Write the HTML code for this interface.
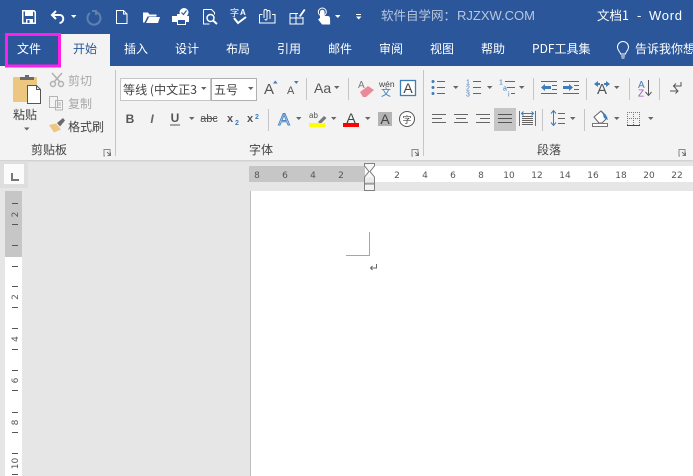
<!DOCTYPE html>
<html><head><meta charset="utf-8"><style>
html,body{margin:0;padding:0;width:693px;height:476px;overflow:hidden;background:#e6e6e6}
svg{display:block}
text{font-family:"Liberation Sans","Noto Sans CJK SC",sans-serif}
.cn{font-family:"Noto Sans CJK SC","Liberation Sans",sans-serif;font-size:12px}
.tab{fill:#fff;text-anchor:middle}
.d{fill:#444}
.dv{stroke:#c6c6c6;stroke-width:1}
.r{font-size:9px;fill:#555;text-anchor:middle;font-family:"DejaVu Sans",sans-serif}
.l{stroke:#666;stroke-width:1;fill:none}
</style></head><body>
<svg width="693" height="476" viewBox="0 0 693 476" xmlns="http://www.w3.org/2000/svg" shape-rendering="crispEdges">
<defs><path id="ar" d="M0 0h5.500l-2.750 3z" shape-rendering="auto"/>
<path id="ln" d="M0 .5h6v6.500M0 0v7h1" fill="none" stroke="#8a8a8a"/></defs>
<rect width="693" height="476" fill="#e6e6e6"/>
<rect width="693" height="66" fill="#2b579a"/>
<rect y="66" width="693" height="94" fill="#f3f3f3"/>
<rect y="160" width="693" height="1.500" fill="#d2d2d2"/>

<!-- QAT -->
<path d="M22.800 10.800h11l1.500 1.500v11h-12.500z" fill="none" stroke="#fff" stroke-width="1.500"/>
<rect x="25" y="11" width="8" height="5" fill="#fff"/><rect x="26" y="19" width="7" height="4.500" fill="#fff"/><rect x="27.500" y="20" width="2" height="3" fill="#2b579a"/>
<g shape-rendering="auto">
<path d="M56 11l-4 4 4 4M52.500 15h7c5 0 5 7.500 0 8" fill="none" stroke="#fff" stroke-width="2"/>
<use href="#ar" x="71" y="15" fill="#fff"/>
<path d="M92 11h4v4M96 12a6.500 6.500 0 1 1-6 1" fill="none" stroke="#5f80b0" stroke-width="2"/>
<path d="M116.500 10.500h7l3.500 3.500v9.500h-10.500zM123.500 10.500v3.500h3.500" fill="none" stroke="#fff" stroke-width="1"/>
<path d="M143 22.500v-10h5l1.500 2h7v2h-9l-3 6zM146 23h12l2-6h-11z" fill="#fff"/>
<path d="M172 16h5v-2h7v2h5v6h-17z" fill="#fff"/><rect x="177.500" y="19.500" width="8" height="5" fill="#2b579a" stroke="#fff"/><circle cx="184" cy="12.500" r="4.500" fill="#fff"/><path d="M181.500 12.500l2 2 3-4" fill="none" stroke="#2b579a" stroke-width="1.200"/>
<path d="M203.500 9.500h8l3 3v2M203.500 9.500v14.500h6" fill="none" stroke="#fff"/><circle cx="210.500" cy="18" r="3.500" fill="none" stroke="#fff" stroke-width="1.500"/><path d="M213 20.500l4 3.500" stroke="#fff" stroke-width="2"/>
<text x="230" y="16" class="cn" style="font-size:9px" fill="#fff">字</text><text x="240" y="15" font-size="8" fill="#fff" font-weight="bold">A</text>
<path d="M234 18l4 5 8-6" fill="none" stroke="#fff" stroke-width="2"/>
<path d="M259.500 14.500h3M272 14.500h3v8.500h-15.500v-8.500" fill="none" stroke="#fff"/><path d="M264 18v-7a1.500 1.500 0 0 1 3 0v8a1 1 0 0 1-2 0M267 12a1.500 1.500 0 0 1 3 0v7" fill="none" stroke="#fff"/>
<path d="M290 13.500h8M290 13.500v10.500h13v-7M290 18h13M296 13.500v10.500" fill="none" stroke="#fff"/><path d="M299 16l5-7 1.500 1-5 7z" fill="#fff"/>
<path d="M320 18v-6a2.300 2.300 0 0 1 4.600 0v4h3c2.500 0 2.500 2 2.500 4v4.500h-8l-4-5z" fill="#fff"/><circle cx="322.300" cy="12" r="4" fill="none" stroke="#fff"/>
<use href="#ar" x="335" y="15" fill="#fff"/>
<rect x="356" y="14" width="5" height="1" fill="#fff"/>
<use href="#ar" x="356" y="16.500" fill="#fff"/>
</g>
<text x="381" y="20" class="cn" fill="#b9c6dc" style="font-size:12.500px">软件自学网：</text>
<text x="457" y="20" fill="#b9c6dc" font-size="13" textLength="78">RJZXW.COM</text>
<text x="597" y="20" class="cn" fill="#fff" style="font-size:12.500px">文档1</text>
<text x="637" y="20" fill="#fff" font-size="13">-</text>
<text x="649" y="20" fill="#fff" font-size="13" textLength="33">Word</text>

<!-- tabs -->
<rect x="61" y="34" width="49" height="32" fill="#f3f3f3"/>
<text x="29" y="53" class="cn tab">文件</text>
<text x="85" y="53" class="cn" text-anchor="middle" fill="#2b579a">开始</text>
<text x="136" y="53" class="cn tab">插入</text>
<text x="187" y="53" class="cn tab">设计</text>
<text x="238" y="53" class="cn tab">布局</text>
<text x="289" y="53" class="cn tab">引用</text>
<text x="340" y="53" class="cn tab">邮件</text>
<text x="391" y="53" class="cn tab">审阅</text>
<text x="442" y="53" class="cn tab">视图</text>
<text x="493" y="53" class="cn tab">帮助</text>
<text x="532" y="53" class="cn" fill="#fff">PDF工具集</text>
<g shape-rendering="auto"><path d="M620.500 54c0-2-3-3.500-3-7a5.500 5.500 0 0 1 11 0c0 3.500-3 5-3 7zM621 56h4M621.500 58h3" fill="none" stroke="#fff"/></g>
<text x="635" y="53" class="cn" fill="#fff">告诉我你想</text>
<rect x="6.500" y="34.500" width="53" height="31.500" fill="none" stroke="#ff1fe8" stroke-width="3"/>

<!-- dividers -->
<path class="dv" d="M115.500 70v86M423.500 70v86M306.500 78v22M348.500 78v22M268.500 109v22M533.500 78v22M586.500 78v22M629.500 78v22M659.500 78v22M542.500 109v22M584.500 109v22"/>

<!-- clipboard -->
<g shape-rendering="auto">
<rect x="13" y="77" width="24" height="25" rx="1" fill="#edc67f"/>
<path d="M20 80v-3h5v-2h4v2h5v3z" fill="#6b6b6b"/>
<path d="M27.500 85.500h9l4 4v14h-13z" fill="#fff" stroke="#555"/>
<path d="M36.500 85.500v4h4" fill="none" stroke="#555"/>
<path d="M52 73l8 9M62 73l-8 9" stroke="#b0b0b0" stroke-width="1.500"/><circle cx="53" cy="84" r="2.500" fill="none" stroke="#b0b0b0" stroke-width="1.500"/><circle cx="61" cy="84" r="2.500" fill="none" stroke="#b0b0b0" stroke-width="1.500"/>
<path d="M49.500 96.500h8v11h-8zM55.500 100.500h7v9.500h-7zM57 103h4M57 105h4M57 107.500h4" fill="#f3f3f3" stroke="#b4b4b4"/>
<path d="M49 125l5 7.500 7-3-5-6z" fill="#edc67f"/><path d="M57 123l6-5 2 2.500-5 6z" fill="#6b6b6b"/>
</g>
<text x="68" y="85" class="cn" fill="#a8a8a8">剪切</text>
<text x="68" y="108" class="cn" fill="#a8a8a8">复制</text>
<text x="68" y="131" class="cn d">格式刷</text>
<text x="25" y="119" class="cn d" text-anchor="middle">粘贴</text>
<use href="#ar" x="24" y="127.500" fill="#666"/>
<text x="49" y="154" class="cn d" text-anchor="middle">剪贴板</text>
<use href="#ln" x="104" y="149"/><path d="M107 152l3 3M110.500 152.500v3h-3" fill="none" stroke="#777" shape-rendering="auto"/>

<!-- font -->
<rect x="120.500" y="78.500" width="90" height="22" fill="#fff" stroke="#c6c6c6"/>
<rect x="211.500" y="78.500" width="45" height="22" fill="#fff" stroke="#b0b0b0"/>
<text x="123" y="94" class="cn d" textLength="74" lengthAdjust="spacingAndGlyphs">等线 (中文正3</text>
<use href="#ar" x="201" y="87" fill="#666"/>
<text x="214" y="94" class="cn d">五号</text>
<use href="#ar" x="248" y="87" fill="#666"/>

<g shape-rendering="auto">
<text x="264" y="94" font-size="15" fill="#555">A</text><path d="M273 83.500l2.300-3 2.300 3z" fill="#3f7cb8"/>
<text x="287" y="94" font-size="11" fill="#555">A</text><path d="M294 81l2.300 3 2.300-3z" fill="#3f7cb8"/>
<text x="314" y="93" font-size="14" fill="#555">Aa</text><use href="#ar" x="334" y="86" fill="#666"/>
<text x="358" y="88" font-size="10" fill="#777">A</text><path d="M360 92l8-6 6 4-8 7h-3z" fill="#e88a98"/>
<text x="379" y="87" font-size="8.500" fill="#444">wén</text><text x="386" y="96" class="cn" style="font-size:10px" fill="#3f7cb8" text-anchor="middle">文</text>
<rect x="400.500" y="80.500" width="15" height="15" fill="#fff" stroke="#3f7cb8" stroke-width="1.300"/><text x="408" y="93" font-size="14" fill="#444" text-anchor="middle">A</text>

<text x="130" y="123" font-size="12" font-weight="bold" fill="#555" text-anchor="middle">B</text>
<text x="152" y="123" font-size="12" font-style="italic" font-weight="bold" fill="#666" text-anchor="middle" font-family="Liberation Serif">I</text>
<text x="175" y="122" font-size="12" font-weight="bold" fill="#555" text-anchor="middle">U</text><path d="M170 125h10" stroke="#555"/>
<use href="#ar" x="189" y="117" fill="#666"/>
<text x="209" y="122" font-size="11" fill="#555" text-anchor="middle">abc</text><path d="M201 118.500h16" stroke="#555"/>
<text x="230" y="122" font-size="11" font-weight="bold" fill="#555" text-anchor="middle">x</text><text x="235" y="125" font-size="7" fill="#3f7cb8" font-weight="bold">2</text>
<text x="250" y="122" font-size="11" font-weight="bold" fill="#555" text-anchor="middle">x</text><text x="255" y="119" font-size="7" fill="#3f7cb8" font-weight="bold">2</text>
<text x="284" y="125" font-size="17" fill="#fff" stroke="#4a86c5" stroke-width="1" text-anchor="middle">A</text><use href="#ar" x="296" y="117" fill="#666"/>
<text x="309" y="118" font-size="8" fill="#555">ab</text><path d="M318 122l6-6 2.500 2-6 6z" fill="#777"/><rect x="309" y="123" width="16" height="4" fill="#ff0"/><use href="#ar" x="331" y="117" fill="#666"/>
<text x="351" y="123" font-size="14" fill="#444" text-anchor="middle">A</text><rect x="343" y="123" width="16" height="4" fill="#f00"/><use href="#ar" x="365" y="117" fill="#666"/>
<rect x="378" y="112" width="14" height="14" fill="#b4b4b4"/><text x="385" y="124" font-size="14" fill="#444" text-anchor="middle">A</text>
<circle cx="407" cy="119" r="7.500" fill="#fff" stroke="#555"/><text x="407" y="123" class="cn d" style="font-size:9px" text-anchor="middle">字</text>
</g>
<text x="261" y="154" class="cn d" text-anchor="middle">字体</text>
<use href="#ln" x="412" y="149"/><path d="M415 152l3 3M418.500 152.500v3h-3" fill="none" stroke="#777" shape-rendering="auto"/>

<!-- paragraph -->
<g class="l">
<path d="M437 81.500h8M437 87.500h8M437 93.500h8"/>
<path d="M473 81.500h8M473 87.500h8M473 93.500h8"/>
<path d="M505 81.500h10M507 87.500h8M511 93.500h4"/>
<path d="M541 81.500h16M552 85.500h5M552 89.500h5M541 93.500h16"/>
<path d="M563 81.500h16M574 85.500h5M574 89.500h5M563 93.500h16"/>
<path d="M432 114.500h14M432 118.500h10M432 122.500h14"/>
<path d="M454 114.500h14M456 118.500h10M454 122.500h14"/>
<path d="M476 114.500h14M480 118.500h10M476 122.500h14"/>
</g>
<rect x="494" y="108" width="22" height="23" fill="#c6c6c6"/>
<path d="M498 114.500h14M498 118.500h14M498 122.500h14" stroke="#555"/>
<path d="M522 116.500h11M522 118.500h11M522 120.500h11M522 122.500h11M522 124.500h11" stroke="#666"/>
<g fill="#3f7cb8" shape-rendering="auto">
<circle cx="433" cy="81.500" r="1.500"/><circle cx="433" cy="87.500" r="1.500"/><circle cx="433" cy="93.500" r="1.500"/>
<text x="466" y="84.500" font-size="7">1</text><text x="466" y="90.500" font-size="7">2</text><text x="466" y="96.500" font-size="7">3</text>
<text x="499" y="84.500" font-size="7">1</text><text x="503" y="90.500" font-size="7">a</text><text x="508" y="96.500" font-size="7">i</text>
<path d="M541 87.500l4-3.500v2h6v3h-6v2z"/>
<path d="M573 87.500l-4-3.500v2h-6v3h6v2z"/>
<path d="M594 84l4-3v2h2v2h-2v2zM610 84l-4-3v2h-2v2h2v2z"/>
</g>
<g shape-rendering="auto">
<path d="M519.500 111v15M535.500 111v15" stroke="#3f7cb8"/><path d="M522 113.500h11M523.500 111.500l-2 2 2 2M531.500 111.500l2 2-2 2" stroke="#3f7cb8" fill="none"/>
<text x="602" y="94" font-size="15" fill="#555" text-anchor="middle">A</text>
<text x="638" y="88" font-size="10" fill="#3f7cb8">A</text><text x="638" y="96.500" font-size="10" fill="#9a5bb5">Z</text>
<path d="M648.500 80v15M645.500 92l3 3.500 3-3.500" stroke="#555" fill="none"/>
<path d="M681 82v4h-7M676 83.500l-2.500 2.500 2.500 2.500M670 91h8M675.500 88.500l2.500 2.500-2.500 2.500" stroke="#555" fill="none"/>
<path d="M553.500 111v14M551 113.500l2.500-3 2.500 3M551 122.500l2.500 3 2.500-3" stroke="#3f7cb8" fill="none"/>
<path d="M558 113.500h7M558 118.500h7M558 123.500h7" stroke="#666"/>
<path d="M594 117l7-6 6 7-5 5h-3z" fill="#fff" stroke="#666"/><path d="M602 111l4 4 2 5-4-2z" fill="#3f7cb8"/><rect x="592.500" y="123.500" width="15" height="3" fill="#fff" stroke="#777"/>
</g>
<path d="M627 112.500h13M627 118.500h13M627.500 112v13M633.500 112v13M639.500 112v13" stroke="#777" stroke-dasharray="1 1"/>
<path d="M627 125.500h13" stroke="#444"/>
<g fill="#666">
<use href="#ar" x="453" y="86"/><use href="#ar" x="487" y="86"/><use href="#ar" x="519" y="86"/><use href="#ar" x="614" y="86"/>
<use href="#ar" x="570" y="117"/><use href="#ar" x="614" y="117"/><use href="#ar" x="648" y="117"/>
</g>
<text x="549" y="154" class="cn d" text-anchor="middle">段落</text>
<use href="#ln" x="679" y="149"/><path d="M682 152l3 3M685.500 152.500v3h-3" fill="none" stroke="#777" shape-rendering="auto"/>

<!-- tab selector -->
<rect x="0" y="161" width="28" height="27" fill="#dedede"/>
<rect x="4" y="164" width="20" height="20" fill="#fbfbfb"/>
<path d="M11 173h2v6h6v2h-8z" fill="#777"/>

<!-- h ruler -->
<rect x="249" y="166" width="116" height="16" fill="#c6c6c6"/>
<rect x="365" y="166" width="328" height="16" fill="#fff"/>
<rect x="251" y="191" width="442" height="285" fill="#fff"/>
<rect x="250" y="191" width="1" height="285" fill="#bdbdbd"/>
<g shape-rendering="auto">
<text class="r" x="257" y="178">8</text><text class="r" x="285" y="178">6</text><text class="r" x="313" y="178">4</text><text class="r" x="341" y="178">2</text>
<text class="r" x="397" y="178">2</text><text class="r" x="425" y="178">4</text><text class="r" x="453" y="178">6</text><text class="r" x="481" y="178">8</text>
<text class="r" x="509" y="178">10</text><text class="r" x="537" y="178">12</text><text class="r" x="565" y="178">14</text><text class="r" x="593" y="178">16</text><text class="r" x="621" y="178">18</text><text class="r" x="649" y="178">20</text><text class="r" x="677" y="178">22</text>
<path d="M364.500 163.500h10v2.500l-4.500 5.500 4.500 5.500v6h-10v-6l4.500-5.500-4.500-5.500z" fill="#f7f7f7" stroke="#808080"/>
<path d="M364.500 184v6.500h10v-6.500z" fill="#f3f3f3" stroke="#808080"/>
<path d="M365 177.500h9v6h-9z" fill="#e2e2e2" opacity=".6"/>
</g>

<!-- crop mark -->
<path d="M369.500 232v23.500H346" fill="none" stroke="#a6a6a6"/>
<g shape-rendering="auto"><path d="M376.500 264v4h-6M372.500 266l-2 2 2 2" fill="none" stroke="#666"/></g>

<!-- v ruler -->
<rect x="5" y="191" width="17" height="66" fill="#c6c6c6"/>
<rect x="5" y="257" width="17" height="219" fill="#fff"/>
<path d="M12 203.500h6M12 224.500h6M12 245.500h6M12 266.500h6M12 286.500h6M12 307.500h6M12 328.500h6M12 349.500h6M12 370.500h6M12 390.500h6M12 412.500h6M12 432.500h6M12 453.500h6M12 474.500h6" stroke="#555"/>
<g shape-rendering="auto">
<text class="r" transform="translate(18 214.500) rotate(-90)">2</text>
<text class="r" transform="translate(18 297) rotate(-90)">2</text>
<text class="r" transform="translate(18 339) rotate(-90)">4</text>
<text class="r" transform="translate(18 380.500) rotate(-90)">6</text>
<text class="r" transform="translate(18 422.500) rotate(-90)">8</text>
<text class="r" transform="translate(18 463.500) rotate(-90)">10</text>
</g>
</svg>
</body></html>
